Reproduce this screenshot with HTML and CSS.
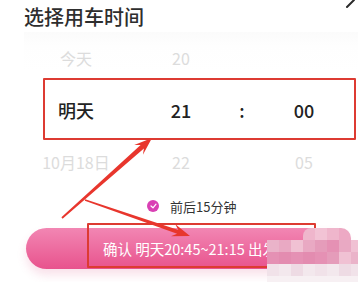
FILE: index.html
```html
<!DOCTYPE html>
<html>
<head>
    <title>选择用车时间</title>
    <link rel="stylesheet" href="styles.css">
</head>
<body>
    <div class="sheet">
        <h1 class="title">选择用车时间</h1>
        <svg class="close" width="12" height="10" viewBox="0 0 12 10">
            <line x1="2" y1="8" x2="9" y2="1" stroke="#2b2b2b" stroke-width="2" stroke-linecap="round"/>
        </svg>

        <div class="picker">
            <div class="row dim">
                <span class="col">今天</span>
                <span class="col">20</span>
                <span class="col"></span>
                <span class="col"></span>
            </div>
            <div class="row active">
                <span class="col">明天</span>
                <span class="col">21</span>
                <span class="col">:</span>
                <span class="col">00</span>
            </div>
            <div class="row dim">
                <span class="col">10月18日</span>
                <span class="col">22</span>
                <span class="col"></span>
                <span class="col">05</span>
            </div>
        </div>

        <div class="window">
            <span class="check">
                <svg width="7" height="6" viewBox="0 0 7 6">
                    <path d="M1 3 L3 4.8 L6 1.2" fill="none" stroke="#fff" stroke-width="1.2" stroke-linecap="round" stroke-linejoin="round"/>
                </svg>
            </span>
            <span>前后15分钟</span>
        </div>

        <button class="confirm">确认 明天20:45~21:15 出发</button>

        <!-- annotations -->
        <div class="mark mark-row"></div>
        <div class="mark mark-btn"></div>
        <svg class="arrows" width="358" height="282" viewBox="0 0 358 282">
            <polygon fill="#e8362d" points="62.6,218.7 143.9,148.4 142.9,154.8 152,138 134.2,145.1 140.6,144.9 61.4,217.3"/>
            <polygon fill="#e8362d" points="84.8,200.7 177.1,233.7 170.9,236.3 190,236 175.1,224.0 178.4,229.9 85.2,199.3"/>
        </svg>

        <div class="mosaic">
            <i></i><i></i><i></i><i class="m1 tl"></i><i class="m2"></i><i class="m1"></i><i class="m3 tr"></i><i></i>
            <i class="m4"></i><i class="m5"></i><i class="m6"></i><i class="m5"></i><i class="m7"></i><i class="m8"></i><i class="m5"></i><i class="m6"></i>
            <i class="m8"></i><i class="m9"></i><i class="m8"></i><i class="m9"></i><i class="m8"></i><i class="m7"></i><i class="m6"></i><i class="m4"></i>
            <i class="m10"></i><i class="m11"></i><i class="m12"></i><i class="m11"></i><i class="m10"></i><i class="m11"></i><i class="m12"></i><i class="m10"></i>
            <i class="m13"></i><i class="m13"></i><i class="m13"></i><i class="m13"></i><i class="m13"></i><i class="m13"></i><i class="m13"></i><i class="m13"></i>
        </div>
    </div>
</body>
</html>
```

FILE: styles.css
```css
body {
    margin: 0;
    padding: 0;
    background: #fff;
    font-family: "Noto Sans CJK SC", "Noto Sans", sans-serif;
    color: #333;
}

.sheet {
    position: relative;
    width: 358px;
    height: 282px;
    overflow: hidden;
    background: #fff;
}

.title {
    margin: 0 0 3px;
    padding: 5px 0 0 24px;
    font-size: 20px;
    line-height: 24px;
    font-weight: 500;
    color: #2e2e2e;
}

.close {
    position: absolute;
    top: -1px;
    right: 1px;
}

.picker {
    margin-left: 24px;
    background: linear-gradient(180deg, #fbfbfb 0, #fefefe 14px, #fff 40px);
}

.row {
    display: grid;
    grid-template-columns: 104px 106px 16px 108px;
    align-items: center;
    height: 52px;
    text-align: center;
}

.dim {
    font-size: 16px;
    color: #dcdcdc;
}

.active {
    font-size: 18px;
    font-weight: 500;
    color: #222;
}

.window {
    display: flex;
    align-items: center;
    height: 36px;
    padding-left: 147px;
    font-size: 13px;
    color: #333;
}

.check {
    display: flex;
    align-items: center;
    justify-content: center;
    width: 12px;
    height: 12px;
    margin-right: 11px;
    border-radius: 50%;
    background: #d940b4;
}

.confirm {
    display: block;
    width: 326px;
    height: 41px;
    margin: 4px 0 0 26px;
    padding: 0 0 0 2px;
    border: none;
    border-radius: 21px;
    background: linear-gradient(180deg, #f286b3, #e8538d);
    box-shadow: 0 6px 10px rgba(220, 90, 140, 0.18);
    font-family: inherit;
    font-size: 14.5px;
    color: #fff;
    text-align: center;
}

.mark {
    position: absolute;
    border: 2px solid #dd3b32;
    border-radius: 1px;
}

.mark-row {
    left: 43px;
    top: 78px;
    width: 309px;
    height: 58px;
}

.mark-btn {
    left: 87px;
    top: 223px;
    width: 225px;
    height: 41px;
}

.arrows {
    position: absolute;
    left: 0;
    top: 0;
}

.mosaic {
    position: absolute;
    left: 267px;
    top: 228px;
    display: grid;
    grid-template-columns: repeat(8, 12px);
    grid-auto-rows: 12px;
}

.mosaic i { display: block; }
.mosaic .tl { border-top-left-radius: 8px; }
.mosaic .tr { border-top-right-radius: 10px; }
.m1 { background: #efb6cc; }
.m2 { background: #f2c3d5; }
.m3 { background: #eda9c4; }
.m4 { background: #eab3c9; }
.m5 { background: #e9a9c3; }
.m6 { background: #f0c1d3; }
.m7 { background: #e59cba; }
.m8 { background: #e591b4; }
.m9 { background: #e38cb0; }
.m10 { background: #f1e2e9; }
.m11 { background: #f3e8ed; }
.m12 { background: #eedbe4; }
.m13 { background: #f7f0f3; }
```
